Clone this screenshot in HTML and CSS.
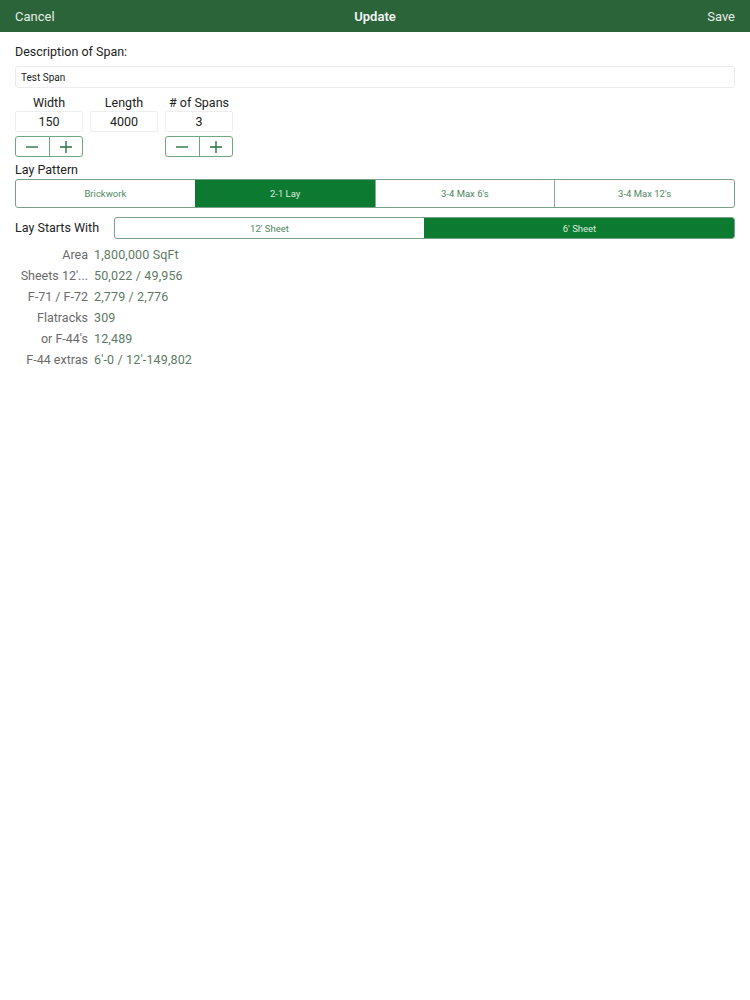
FILE: index.html
```html
<!DOCTYPE html>
<html>
<head>
<meta charset="utf-8">
<link rel="stylesheet" href="styles.css">
</head>
<body>
<header class="nav">
  <span class="nav-btn">Cancel</span>
  <span class="nav-title">Update</span>
  <span class="nav-btn">Save</span>
</header>
<main class="form">
  <div class="label desc-label">Description of Span:</div>
  <div class="textfield">Test Span</div>

  <div class="fields">
    <div class="field">
      <div class="field-label">Width</div>
      <div class="field-box">150</div>
      <div class="stepper">
        <span class="step"><svg viewBox="0 0 14 14" width="14" height="14"><path d="M1 7h12"/></svg></span>
        <span class="step"><svg viewBox="0 0 14 14" width="14" height="14"><path d="M1 7h12M7 1v12"/></svg></span>
      </div>
    </div>
    <div class="field">
      <div class="field-label">Length</div>
      <div class="field-box">4000</div>
    </div>
    <div class="field">
      <div class="field-label"># of Spans</div>
      <div class="field-box">3</div>
      <div class="stepper">
        <span class="step"><svg viewBox="0 0 14 14" width="14" height="14"><path d="M1 7h12"/></svg></span>
        <span class="step"><svg viewBox="0 0 14 14" width="14" height="14"><path d="M1 7h12M7 1v12"/></svg></span>
      </div>
    </div>
  </div>

  <div class="label pattern-label">Lay Pattern</div>
  <div class="segmented pattern">
    <span class="seg">Brickwork</span>
    <span class="seg active">2-1 Lay</span>
    <span class="seg">3-4 Max 6's</span>
    <span class="seg">3-4 Max 12's</span>
  </div>

  <div class="starts">
    <span class="label">Lay Starts With</span>
    <div class="segmented sheet">
      <span class="seg">12' Sheet</span>
      <span class="seg active">6' Sheet</span>
    </div>
  </div>

  <div class="stats">
    <span class="k">Area</span><span class="v">1,800,000 SqFt</span>
    <span class="k">Sheets 12'...</span><span class="v">50,022 / 49,956</span>
    <span class="k">F-71 / F-72</span><span class="v">2,779 / 2,776</span>
    <span class="k">Flatracks</span><span class="v">309</span>
    <span class="k">or F-44's</span><span class="v">12,489</span>
    <span class="k">F-44 extras</span><span class="v">6'-0 / 12'-149,802</span>
  </div>
</main>
</body>
</html>
```
FILE: styles.css
```css
* { box-sizing: border-box; }
body {
  margin: 0;
  background: #fff;
  font-family: Roboto, "Liberation Sans", sans-serif;
  color: #222;
}
.nav {
  height: 32px;
  background: #2b6438;
  display: flex;
  align-items: center;
  justify-content: space-between;
  padding: 0 15px;
  color: #e6ede8;
  font-size: 13px;
  position: relative;
}
.nav-title {
  font-weight: 600;
  color: #f2f5f3;
  position: absolute;
  left: 0;
  right: 0;
  text-align: center;
  pointer-events: none;
}
.form {
  padding: 12px 15px 0 15px;
}
.label {
  font-size: 12.5px;
  color: #222;
}
.desc-label {
  line-height: 16px;
}
.textfield {
  margin-top: 6px;
  height: 22px;
  border: 1px solid #ececec;
  border-radius: 3px;
  font-size: 10px;
  padding: 0 5px;
  display: flex;
  align-items: center;
  color: #222;
}
.fields {
  display: flex;
  gap: 7px;
  margin-top: 7px;
}
.field {
  width: 68px;
  display: flex;
  flex-direction: column;
}
.field-label {
  text-align: center;
  font-size: 12.5px;
  line-height: 15px;
}
.field-box {
  margin-top: 1px;
  height: 21px;
  border: 1px solid #eeeeee;
  border-radius: 2px;
  text-align: center;
  font-size: 12.5px;
  line-height: 19px;
}
.stepper {
  margin-top: 4px;
  height: 21px;
  border: 1px solid #6fa782;
  border-radius: 3px;
  display: flex;
}
.step {
  flex: 1;
  display: flex;
  align-items: center;
  justify-content: center;
}
.step svg {
  stroke: #2a7343;
  stroke-width: 1.4;
  fill: none;
}
.step + .step {
  border-left: 1px solid #6fa782;
}
.pattern-label {
  margin-top: 5px;
  line-height: 16px;
}
.segmented {
  display: flex;
  border: 1px solid #7aa08a;
  border-radius: 3px;
  overflow: hidden;
}
.seg {
  flex: 1;
  display: flex;
  align-items: center;
  justify-content: center;
  font-size: 9.5px;
  color: #4e8862;
}
.seg + .seg {
  border-left: 1px solid #8fa89a;
}
.seg.active {
  background: #0d7a32;
  color: #d9ebde;
  border-left-color: #0d7a32;
}
.pattern {
  margin-top: 1px;
  height: 29px;
}
.starts {
  display: flex;
  align-items: center;
  margin-top: 9px;
}
.starts .label {
  width: 99px;
  position: relative;
  top: -1px;
}
.sheet {
  flex: 1;
  height: 22px;
}
.stats {
  display: grid;
  grid-template-columns: 73px auto;
  column-gap: 6px;
  row-gap: 0;
  margin-top: 5px;
  font-size: 12.5px;
  line-height: 21px;
  justify-content: start;
}
.k {
  text-align: right;
  color: #6b6b6b;
  white-space: nowrap;
}
.v {
  color: #5c7a64;
  letter-spacing: 0.15px;
}
```
